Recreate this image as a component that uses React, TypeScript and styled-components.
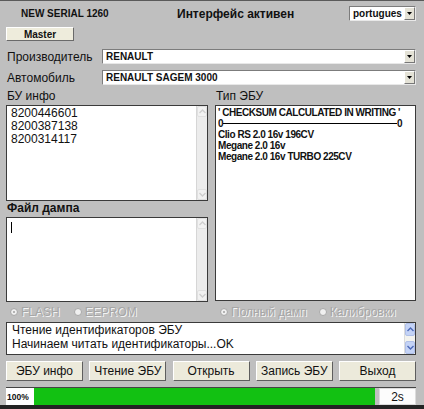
import React from "react";
import styled, { createGlobalStyle } from "styled-components";

const GlobalStyle = createGlobalStyle`
  html, body { margin: 0; padding: 0; background: #bfbfbf; }
  body { font-family: "Liberation Sans", Arial, sans-serif; color: #111; }
  * { box-sizing: border-box; }
`;

const Window = styled.div`
  width: 424px;
  height: 409px;
  border-top: 1px solid #5a5a5a;
  border-bottom: 4px solid #232323;
  padding: 0 8px 0 6px;
  background: #bfbfbf;
  display: flex;
  flex-direction: column;
`;

const Header = styled.div`
  height: 25px;
  display: grid;
  grid-template-columns: 171px 1fr 67px;
  align-items: center;
`;

const Serial = styled.span`
  padding-left: 15px;
  font-size: 10px;
  font-weight: bold;
`;

const Title = styled.span`
  font-size: 12px;
  font-weight: bold;
`;

const MasterButton = styled.button`
  margin-top: 1px;
  width: 68px;
  height: 14px;
  padding: 0;
  font-family: inherit;
  font-size: 10px;
  font-weight: bold;
  color: #111;
  background: #eeecdc;
  border: 1px solid;
  border-color: #fff #6a6a6a #6a6a6a #fff;
`;

const Fields = styled.div`
  margin-top: 8px;
  display: grid;
  grid-template-columns: 96px 1fr;
  grid-auto-rows: 15px;
  row-gap: 6px;
  align-items: center;
`;

const FieldLabel = styled.span`
  padding-left: 1px;
  font-size: 12px;
`;

const Combo = styled.div`
  height: 15px;
  display: flex;
  align-items: stretch;
  background: #fff;
  border: 1px solid;
  border-color: #7c7c7c #e8e8e8 #e8e8e8 #7c7c7c;
`;

const ComboValue = styled.span`
  flex: 1;
  padding-left: 3px;
  font-size: 10px;
  font-weight: bold;
  line-height: 13px;
  white-space: nowrap;
  overflow: hidden;
`;

const ArrowBtn = styled.span`
  width: 11px;
  display: flex;
  align-items: center;
  justify-content: center;
  background: #e4e2d6;
  border: 1px solid;
  border-color: #fff #777 #777 #fff;
`;

const Columns = styled.div`
  display: grid;
  grid-template-columns: 202px 201px;
  column-gap: 7px;
`;

const Column = styled.div`
  display: flex;
  flex-direction: column;
`;

const PanelLabel = styled.div<{ $bold?: boolean; $h: number }>`
  height: ${p => p.$h}px;
  display: flex;
  align-items: flex-end;
  padding-bottom: 2px;
  padding-left: 1px;
  font-size: 12px;
  font-weight: ${p => (p.$bold ? "bold" : "normal")};
`;

const Box = styled.div<{ $h: number }>`
  height: ${p => p.$h}px;
  display: flex;
  background: #fff;
  border: 1px solid #3a3a3a;
`;

const BoxText = styled.div`
  flex: 1;
  padding: 1px 4px;
  font-size: 12px;
  line-height: 13px;
`;

const Caret = styled.span`
  display: block;
  width: 1px;
  height: 11px;
  margin-top: 3px;
  background: #000;
`;

const EcuText = styled.div`
  flex: 1;
  padding: 1px 2px;
  font-size: 10px;
  letter-spacing: -0.45px;
  font-weight: bold;
  line-height: 11px;
  white-space: nowrap;
`;

const Rule = styled.div`
  display: flex;
  align-items: center;
  width: 184px;
`;

const RuleLine = styled.span`
  flex: 1;
  height: 1px;
  background: #000;
`;

const ScrollBar = styled.div<{ $active?: boolean }>`
  width: 11px;
  display: flex;
  flex-direction: column;
  justify-content: space-between;
  background: ${p => (p.$active ? "#f3f3ee" : "#ececec")};
  border-left: 1px solid ${p => (p.$active ? "#dcdcdc" : "#d6d6d6")};
`;

const ScrollBtn = styled.span<{ $active?: boolean }>`
  height: ${p => (p.$active ? "13px" : "11px")};
  display: flex;
  align-items: center;
  justify-content: center;
  background: ${p => (p.$active ? "#c4d3f6" : "#f2f2f2")};
  border: 1px solid ${p => (p.$active ? "#b0c0e8" : "#e0e0e0")};
  border-radius: 2px;
`;

const RadioRow = styled.div`
  height: 20px;
  display: grid;
  grid-template-columns: 209px 1fr;
  align-items: center;
`;

const RadioGroup = styled.div<{ $pad: number; $gap: number }>`
  display: flex;
  align-items: center;
  padding-left: ${p => p.$pad}px;
  gap: ${p => p.$gap}px;
`;

const Radio = styled.span`
  display: flex;
  align-items: center;
  gap: 3px;
  font-size: 12px;
  color: #a6a6a6;
  text-shadow: 1px 1px 0 #f4f4f4;
`;

const RadioDot = styled.span<{ $on?: boolean }>`
  width: 8px;
  height: 8px;
  border-radius: 50%;
  background: #f0f0f0;
  border: 1px solid #a8a8a8;
  box-shadow: ${p => (p.$on ? "inset 0 0 0 2px #f0f0f0, inset 0 0 0 4px #a0a0a0" : "none")};
`;

const LogBox = styled.div`
  height: 33px;
  display: flex;
  background: #fff;
  border: 1px solid #3a3a3a;
`;

const LogText = styled.div`
  flex: 1;
  padding: 0 5px;
  font-size: 12px;
  line-height: 14px;
`;

const ButtonRow = styled.div`
  margin-top: 6px;
  height: 20px;
  display: flex;
  justify-content: space-between;
`;

const Btn = styled.button`
  width: 77px;
  height: 20px;
  padding: 0;
  font-family: inherit;
  font-size: 12px;
  color: #111;
  background: #eceadb;
  border: 1px solid;
  border-color: #fff #5e5e5e #5e5e5e #fff;
`;

const Progress = styled.div`
  margin-top: 6px;
  height: 18px;
  display: flex;
  align-items: stretch;
  border-top: 1px solid #444;
`;

const Percent = styled.span`
  width: 28px;
  padding-left: 1px;
  display: flex;
  align-items: center;
  background: #fff;
  font-size: 8.5px;
  font-weight: bold;
`;

const Bar = styled.span`
  flex: 1;
  background: #12c112;
`;

const Time = styled.span`
  width: 37px;
  margin-left: 4px;
  display: flex;
  align-items: center;
  justify-content: center;
  background: #fcfcfc;
  border: 1px solid #dcdcdc;
  font-size: 12px;
`;

function Chevron({ up, color }: { up?: boolean; color: string }) {
  return (
    <svg width="7" height="5" viewBox="0 0 7 5">
      <path d={up ? "M0.5 4L3.5 1L6.5 4" : "M0.5 1L3.5 4L6.5 1"} fill="none" stroke={color} strokeWidth="1.4" />
    </svg>
  );
}

function Triangle() {
  return (
    <svg width="5" height="3" viewBox="0 0 5 3">
      <path d="M0 0H5L2.5 3Z" fill="#000" />
    </svg>
  );
}

function Scroll({ active }: { active?: boolean }) {
  const c = active ? "#4d6ab8" : "#cfcfcf";
  return (
    <ScrollBar $active={active}>
      <ScrollBtn $active={active}><Chevron up color={c} /></ScrollBtn>
      <ScrollBtn $active={active}><Chevron color={c} /></ScrollBtn>
    </ScrollBar>
  );
}

function ComboBox({ value }: { value: string }) {
  return (
    <Combo>
      <ComboValue>{value}</ComboValue>
      <ArrowBtn><Triangle /></ArrowBtn>
    </Combo>
  );
}

export default function App() {
  return (
    <>
      <GlobalStyle />
      <Window>
        <Header>
          <Serial>NEW SERIAL 1260</Serial>
          <Title>Интерфейс активен</Title>
          <ComboBox value="portugues" />
        </Header>
        <MasterButton>Master</MasterButton>
        <Fields>
          <FieldLabel>Производитель</FieldLabel>
          <ComboBox value="RENAULT" />
          <FieldLabel>Автомобиль</FieldLabel>
          <ComboBox value="RENAULT SAGEM 3000" />
        </Fields>
        <Columns>
          <Column>
            <PanelLabel $h={20}>БУ инфо</PanelLabel>
            <Box $h={96}>
              <BoxText>
                8200446601<br />8200387138<br />8200314117
              </BoxText>
              <Scroll />
            </Box>
            <PanelLabel $h={16} $bold>Файл дампа</PanelLabel>
            <Box $h={85}>
              <BoxText><Caret /></BoxText>
              <Scroll />
            </Box>
          </Column>
          <Column>
            <PanelLabel $h={20}>Тип ЭБУ</PanelLabel>
            <Box $h={196}>
              <EcuText>
                <div>' CHECKSUM CALCULATED IN WRITING '</div>
                <Rule><span>0</span><RuleLine /><span>0</span></Rule>
                <div>Clio RS 2.0 16v 196CV</div>
                <div>Megane 2.0 16v</div>
                <div>Megane 2.0 16v TURBO 225CV</div>
              </EcuText>
            </Box>
          </Column>
        </Columns>
        <RadioRow>
          <RadioGroup $pad={4} $gap={14}>
            <Radio><RadioDot $on />FLASH</Radio>
            <Radio><RadioDot />EEPROM</Radio>
          </RadioGroup>
          <RadioGroup $pad={5} $gap={12}>
            <Radio><RadioDot $on />Полный дамп</Radio>
            <Radio><RadioDot />Калибровки</Radio>
          </RadioGroup>
        </RadioRow>
        <LogBox>
          <LogText>
            Чтение идентификаторов ЭБУ<br />Начинаем читать идентификаторы...OK
          </LogText>
          <Scroll active />
        </LogBox>
        <ButtonRow>
          <Btn>ЭБУ инфо</Btn>
          <Btn>Чтение ЭБУ</Btn>
          <Btn>Открыть</Btn>
          <Btn>Запись ЭБУ</Btn>
          <Btn>Выход</Btn>
        </ButtonRow>
        <Progress>
          <Percent>100%</Percent>
          <Bar />
          <Time>2s</Time>
        </Progress>
      </Window>
    </>
  );
}
